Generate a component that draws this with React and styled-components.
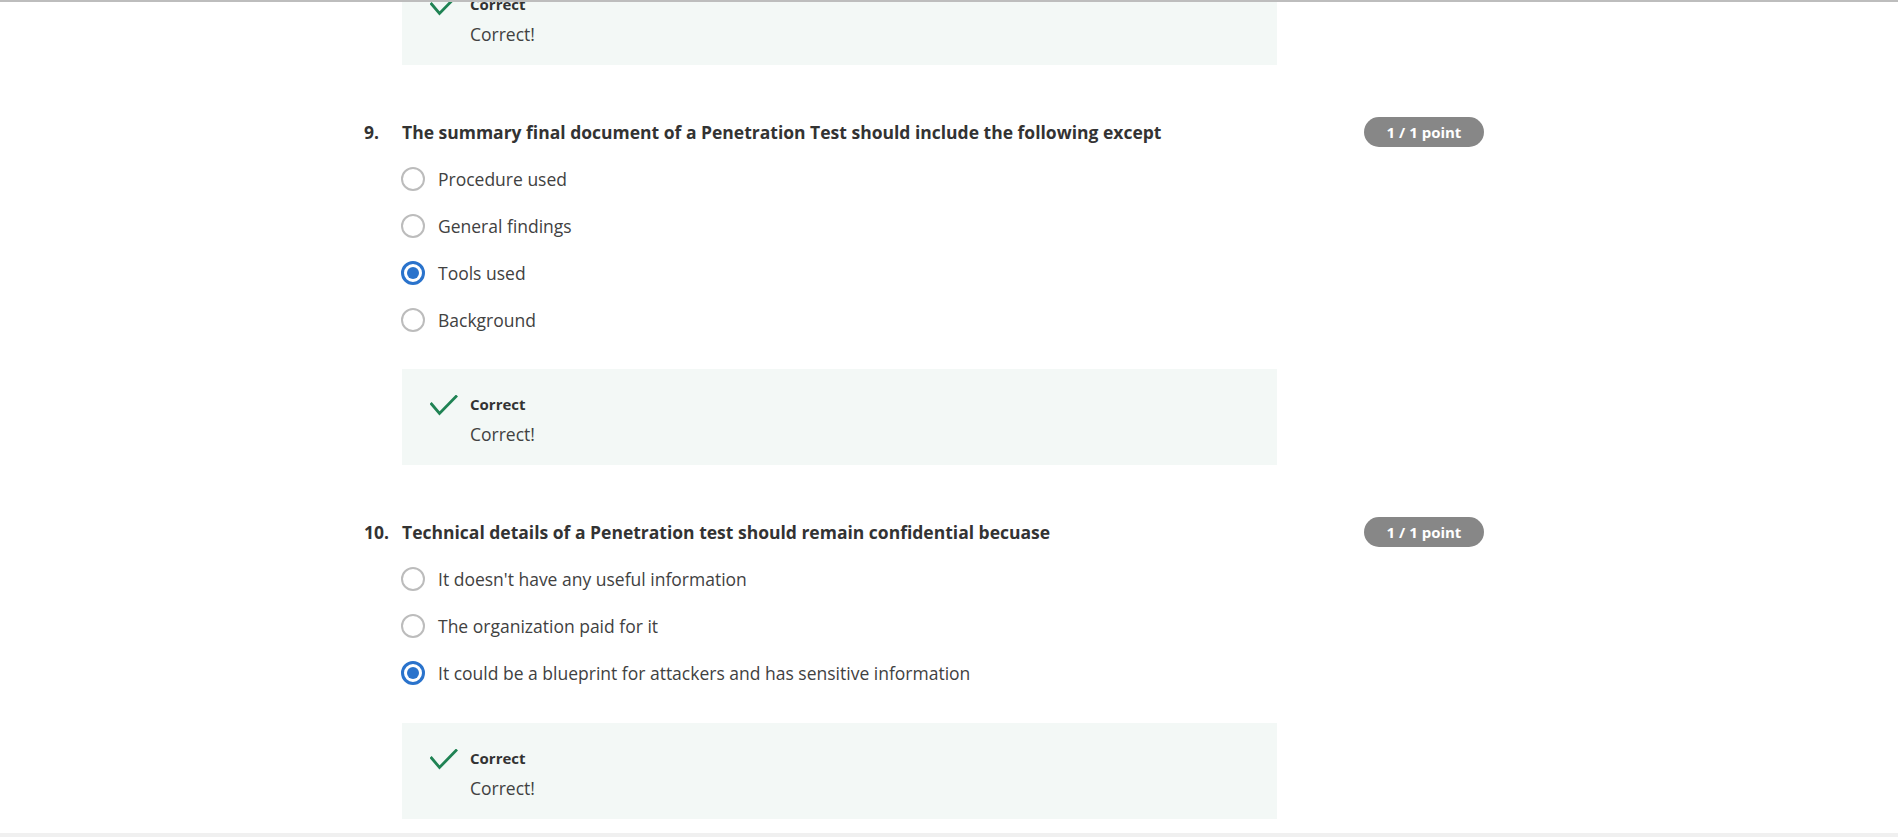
import styled, { createGlobalStyle } from "styled-components";

const GlobalStyle = createGlobalStyle`
  html, body {
    margin: 0;
    padding: 0;
    background: #ffffff;
    font-family: "Open Sans", "Noto Sans", Arial, sans-serif;
    color: #333333;
  }
  * { box-sizing: border-box; }
`;

const questions = [
  {
    number: "9.",
    title:
      "The summary final document of a Penetration Test should include the following except",
    options: ["Procedure used", "General findings", "Tools used", "Background"],
    selected: 2,
    gapBefore: 26,
  },
  {
    number: "10.",
    title:
      "Technical details of a Penetration test should remain confidential becuase",
    options: [
      "It doesn't have any useful information",
      "The organization paid for it",
      "It could be a blueprint for attackers and has sensitive information",
    ],
    selected: 2,
    gapBefore: 27,
  },
];

const Check = () => (
  <svg width="28" height="22" viewBox="0 0 28 22" fill="none">
    <polyline
      points="1.5,9 9.5,18.5 26,1.5"
      stroke="#1f8354"
      strokeWidth="2.8"
      strokeLinecap="square"
      strokeLinejoin="miter"
    />
  </svg>
);

const Feedback = ({ gapBefore }) => (
  <FeedbackBox $gap={gapBefore}>
    <IconSlot>
      <Check />
    </IconSlot>
    <FeedbackText>
      <FeedbackLabel>Correct</FeedbackLabel>
      <FeedbackMessage>Correct!</FeedbackMessage>
    </FeedbackText>
  </FeedbackBox>
);

const App = () => {
  return (
    <Page>
      <GlobalStyle />
      <TopRule />
      <Scroller>
        <Content>
          <Feedback gapBefore={0} />
          {questions.map((q, qi) => (
            <Question key={`q-${qi}`}>
              <QuestionNumber>{q.number}</QuestionNumber>
              <QuestionBody>
                <TitleRow>
                  <QuestionTitle>{q.title}</QuestionTitle>
                  <PointBadge>1 / 1 point</PointBadge>
                </TitleRow>
                <OptionList>
                  {q.options.map((opt, oi) => (
                    <OptionRow key={`o-${oi}`}>
                      <Radio $checked={oi === q.selected} />
                      <OptionText>{opt}</OptionText>
                    </OptionRow>
                  ))}
                </OptionList>
                <Feedback gapBefore={q.gapBefore} />
              </QuestionBody>
            </Question>
          ))}
        </Content>
      </Scroller>
      <BottomBar />
    </Page>
  );
};

export default App;

const Page = styled.div`
  display: flex;
  flex-direction: column;
  width: 100%;
  height: 837px;
  overflow: hidden;
`;

const TopRule = styled.div`
  height: 2px;
  flex: 0 0 2px;
  background: #bdbdbd;
`;

const Scroller = styled.div`
  flex: 1;
  overflow: hidden;
`;

const BottomBar = styled.div`
  height: 4px;
  flex: 0 0 4px;
  background: #f0f0f0;
`;

const Content = styled.div`
  display: flex;
  flex-direction: column;
  width: 1120px;
  margin-left: 364px;
  margin-top: -33px;
  padding-left: 38px;
`;

const Question = styled.div`
  display: grid;
  grid-template-columns: 38px 1fr;
  margin-top: 52px;
  margin-left: -38px;
`;

const QuestionNumber = styled.div`
  font-size: 17.5px;
  font-weight: 700;
  line-height: 30px;
  color: #333333;
`;

const QuestionBody = styled.div`
  display: flex;
  flex-direction: column;
`;

const TitleRow = styled.div`
  display: flex;
  align-items: center;
  justify-content: space-between;
  height: 30px;
`;

const QuestionTitle = styled.div`
  font-size: 17.5px;
  font-weight: 700;
  line-height: 24px;
  color: #333333;
`;

const PointBadge = styled.div`
  display: flex;
  align-items: center;
  justify-content: center;
  width: 120px;
  height: 30px;
  border-radius: 15px;
  background: #878787;
  color: #ffffff;
  font-size: 15px;
  font-weight: 700;
`;

const OptionList = styled.div`
  display: flex;
  flex-direction: column;
  margin-top: 8px;
`;

const OptionRow = styled.label`
  display: flex;
  align-items: center;
  gap: 13px;
  height: 47px;
  margin-left: -1px;
`;

const Radio = styled.span`
  position: relative;
  display: inline-block;
  width: 24px;
  height: 24px;
  border-radius: 50%;
  border: ${(p) => (p.$checked ? "3px solid #2a73cc" : "2px solid #bcbcbc")};
  background: #ffffff;

  &::after {
    content: "";
    display: ${(p) => (p.$checked ? "block" : "none")};
    position: absolute;
    left: 3px;
    top: 3px;
    width: 12px;
    height: 12px;
    border-radius: 50%;
    background: #2a73cc;
  }
`;

const OptionText = styled.span`
  font-size: 17.5px;
  font-weight: 400;
  line-height: 24px;
  color: #414141;
`;

const FeedbackBox = styled.div`
  display: flex;
  align-items: flex-start;
  gap: 12px;
  width: 875px;
  height: 96px;
  margin-top: ${(p) => p.$gap}px;
  padding: 26px 28px 0;
  background: #f3f8f6;
`;

const IconSlot = styled.div`
  width: 28px;
  height: 22px;
  flex: 0 0 28px;
`;

const FeedbackText = styled.div`
  display: flex;
  flex-direction: column;
  gap: 8px;
  margin-top: -1px;
`;

const FeedbackLabel = styled.div`
  font-size: 15px;
  font-weight: 700;
  line-height: 20px;
  color: #333333;
`;

const FeedbackMessage = styled.div`
  font-size: 17.5px;
  font-weight: 400;
  line-height: 24px;
  color: #414141;
`;
